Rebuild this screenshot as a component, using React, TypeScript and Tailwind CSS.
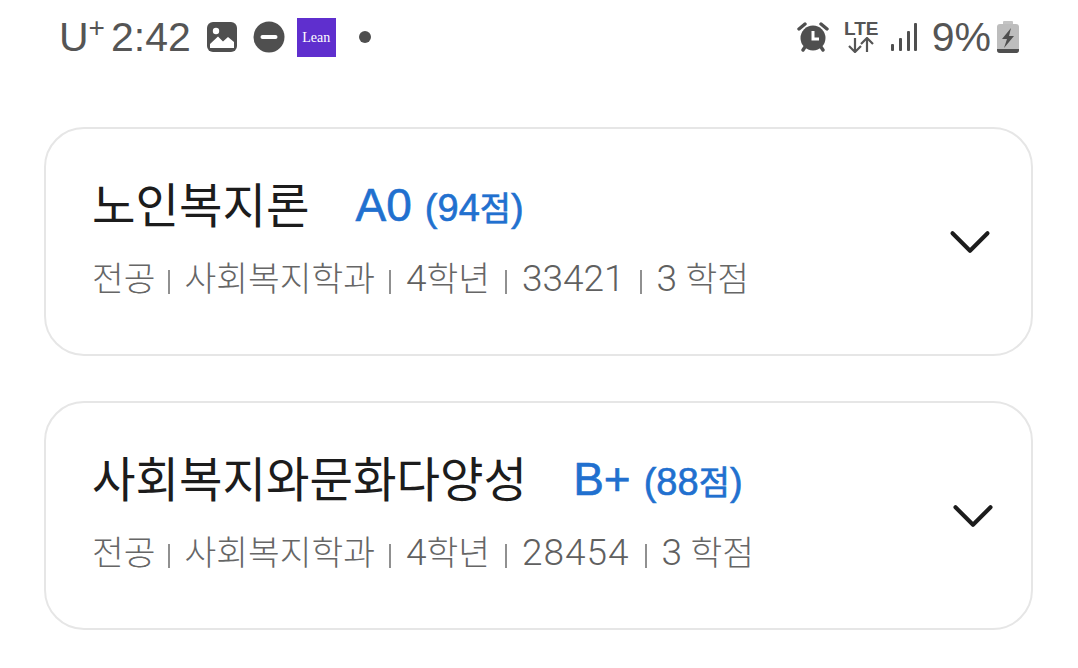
import { ChevronDown } from "lucide-react";

const font = { fontFamily: "'Liberation Sans', 'Noto Sans CJK KR', sans-serif" };
const cardFont = { fontFamily: "Roboto, 'Noto Sans CJK KR', sans-serif" };

function GalleryIcon() {
  return (
    <svg width="32" height="32" viewBox="0 0 32 32">
      <rect x="1" y="1" width="30" height="30" rx="6" fill="#4f4f4f" />
      <circle cx="10" cy="10" r="3.2" fill="#fff" />
      <path d="M4 27 V23 L12 15.5 L17 20.5 L22 16 L28 21 V27 Z" fill="#fff" />
    </svg>
  );
}

function DndIcon() {
  return (
    <svg width="32" height="32" viewBox="0 0 32 32">
      <circle cx="16" cy="16" r="15.5" fill="#4f4f4f" />
      <rect x="7.5" y="14" width="17" height="4" rx="2" fill="#fff" />
    </svg>
  );
}

function AlarmIcon() {
  return (
    <svg width="32" height="32" viewBox="0 0 32 32">
      <circle cx="16" cy="17" r="12.5" fill="#4f4f4f" />
      <path d="M2 8 L8 3 M30 8 L24 3 M6 29 L8 26 M26 29 L24 26" stroke="#4f4f4f" strokeWidth="3.4" strokeLinecap="round" />
      <path d="M16 10 V18 H22" stroke="#fff" strokeWidth="3" fill="none" />
    </svg>
  );
}

function LteIcon() {
  return (
    <div className="flex w-[33px] flex-col items-center">
      <span className="text-[19px] leading-[16px] font-bold text-[#555]">LTE</span>
      <svg width="30" height="16" viewBox="0 0 30 16" fill="none" stroke="#555" strokeWidth="2.2">
        <path d="M9 1 V15 M3 9 L9 15 L15 9" />
        <path d="M21 15 V1 M15 7 L21 1 L27 7" />
      </svg>
    </div>
  );
}

function SignalIcon() {
  return (
    <svg width="28" height="30" viewBox="0 0 28 30" fill="#4f4f4f">
      <rect x="1" y="22" width="3" height="7" rx="1" />
      <rect x="9" y="16" width="3" height="13" rx="1" />
      <rect x="17" y="9" width="3" height="20" rx="1" />
      <rect x="24" y="1" width="3" height="28" rx="1" />
    </svg>
  );
}

function BatteryIcon() {
  return (
    <svg width="22" height="32" viewBox="0 0 22 32">
      <rect x="6" y="0" width="10" height="4" rx="1" fill="#c4c4c4" />
      <rect x="0" y="3" width="22" height="29" rx="3" fill="#bdbdbd" />
      <path d="M0 28 H22 V29 A3 3 0 0 1 19 32 H3 A3 3 0 0 1 0 29 Z" fill="#4f4f4f" />
      <path d="M14 7 L5 18 H10 L7 27 L17 15 H12 Z" fill="#4f4f4f" />
    </svg>
  );
}

function Divider({ className = "mx-[15px]" }: { className?: string }) {
  return <span className={`${className} inline-block h-[24px] w-[2px] bg-[#909090] align-[-3px]`} />;
}

// digits run larger than the hangul next to them
function Num({ children, className }: { children: React.ReactNode; className?: string }) {
  return <span className={`text-[37px] text-[#606060] ${className ?? ""}`}>{children}</span>;
}

function CourseCard({ title, grade, score, code, codeClass, chevronRight }: {
  title: string;
  grade: string;
  score: string;
  code: string;
  codeClass: string;
  chevronRight: string;
}) {
  return (
    <div style={cardFont} className="flex h-[229px] w-[989px] items-center justify-between rounded-[40px] border-2 border-[#e6e6e6] bg-white pl-[46px]">
      <div className="flex flex-col pb-[6px]">
        <div className="flex items-baseline gap-[46px]">
          <span className="text-[47.3px] leading-[60px] text-[#1c1c1c]">{title}</span>
          <span style={font} className="flex -translate-y-[2px] items-baseline gap-[13px] text-[#2170cf] [-webkit-text-stroke:0.6px_#2170cf]">
            <span className="text-[46px] leading-[60px]">{grade}</span>
            <span className="text-[38px] leading-[40px]">({score}<span className="text-[34px]">점</span>)</span>
          </span>
        </div>
        <div className="mt-[20px] text-[34.5px] leading-[44px] font-light text-[#666]">
          전공<Divider className="mr-[14px] ml-[13px]" />사회복지학과<Divider className="mr-[15px] ml-[14px]" /><Num>4</Num>학년<Divider /><Num className={codeClass}>{code}</Num><Divider /><Num>3</Num> 학점
        </div>
      </div>
      <ChevronDown className={chevronRight} size={70} strokeWidth={1.4} color="#1c1c1c" />
    </div>
  );
}

export default function App() {
  return (
    <div style={font} className="h-[668px] w-[1078px] overflow-hidden bg-white">
      <div className="flex h-[74px] items-center justify-between pr-[59px] pl-[59px]">
        <div className="flex items-center">
          <span className="text-[41px] leading-none text-[#555]">U<sup className="text-[28px]">+</sup></span>
          <span className="ml-[6px] text-[41px] leading-none text-[#555]">2:42</span>
          <div className="ml-[15px]"><GalleryIcon /></div>
          <div className="ml-[15px]"><DndIcon /></div>
          <div className="ml-[12px] flex h-[39px] w-[39px] items-center justify-center bg-[#5f2fce] text-[14px] text-white" style={{ fontFamily: "'Liberation Serif', serif" }}>Lean</div>
          <span className="ml-[23px] h-[12px] w-[12px] rounded-full bg-[#4f4f4f]" />
        </div>
        <div className="flex items-center">
          <AlarmIcon />
          <div className="ml-[16px]"><LteIcon /></div>
          <div className="ml-[12px]"><SignalIcon /></div>
          <span className="ml-[14px] text-[41px] leading-none text-[#555]">9%</span>
          <div className="ml-[6px]"><BatteryIcon /></div>
        </div>
      </div>
      <div className="ml-[44px] mt-[53px] flex flex-col gap-[45px]">
        <CourseCard title="노인복지론" grade="A0" score="94" code="33421" codeClass="" chevronRight="mr-[26px]" />
        <CourseCard title="사회복지와문화다양성" grade="B+" score="88" code="28454" codeClass="tracking-[1px]" chevronRight="mr-[23px]" />
      </div>
    </div>
  );
}
